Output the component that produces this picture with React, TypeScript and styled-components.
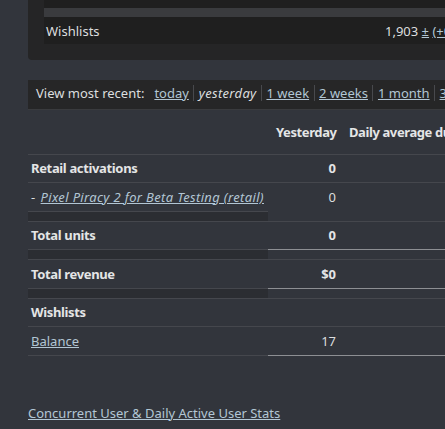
import { Fragment } from "react";
import styled, { createGlobalStyle } from "styled-components";

const GlobalStyle = createGlobalStyle`
  html, body {
    margin: 0;
    padding: 0;
    background: #32353c;
    overflow: hidden;
  }
  body {
    font-family: "Noto Sans", "Open Sans", sans-serif;
    font-size: 13px;
    color: #dcdedf;
  }
`;

const Page = styled.div`
  width: 900px;
  padding-left: 28px;
`;

const SummaryPanel = styled.div`
  background: #252526;
  border-bottom-left-radius: 4px;
  padding: 0 0 16px 16px;
  margin-top: -19px;
`;

const SummaryTable = styled.table`
  border-collapse: collapse;
  width: 860px;
`;

const SummaryRow = styled.tr<{ $strip?: boolean }>`
  background: ${(p) => (p.$strip ? "#3a3b3e" : "#1f1f1f")};
  height: ${(p) => (p.$strip ? "9px" : "27px")};
`;

const SummaryCell = styled.td<{ $w?: number }>`
  padding: 0 2px;
  white-space: nowrap;
  width: ${(p) => (p.$w ? `${p.$w}px` : "auto")};
`;

const Link = styled.a<{ $italic?: boolean }>`
  color: #b2c6d4;
  text-decoration: underline;
  font-style: ${(p) => (p.$italic ? "italic" : "normal")};
  letter-spacing: ${(p) => (p.$italic ? "0.35px" : "normal")};
  cursor: pointer;
`;

const RangeBar = styled.div`
  margin-top: 20px;
  height: 30px;
  background: #262627;
  border-bottom: 1px solid #3a3b3e;
  display: flex;
  align-items: center;
  padding: 0 0 3px 8px;
  box-sizing: border-box;
  white-space: nowrap;
`;

const RangeLabel = styled.span`
  margin-right: 10px;
`;

const Sep = styled.span`
  width: 1px;
  height: 16px;
  background: #48494d;
  margin: 0 4.5px;
`;

const Current = styled.span`
  font-style: italic;
  letter-spacing: 0.3px;
`;

const StatsTable = styled.table`
  border-collapse: collapse;
  table-layout: fixed;
  width: 700px;
`;

const HeadRow = styled.tr`
  height: 44px;
  border-bottom: 1px solid #45474d;
`;

const HeadCell = styled.th<{ $align?: string; $w?: number }>`
  width: ${(p) => (p.$w ? `${p.$w}px` : "auto")};
  box-sizing: border-box;
  font-weight: 700;
  letter-spacing: -0.4px;
  text-align: ${(p) => p.$align || "right"};
  padding: 0 5px 0 8px;
  white-space: nowrap;
  overflow: hidden;
  color: #e4e5e6;
`;

const DataRow = styled.tr<{ $tall?: boolean }>`
  height: ${(p) => (p.$tall ? "29px" : "28px")};
`;

type Line = "none" | "dark" | "light";

const lineColor = (l?: Line) =>
  l === "light" ? "1px solid #8d8f93" : l === "dark" ? "1px solid #45474d" : "none";

const LabelCell = styled.td<{ $bold?: boolean; $line?: Line }>`
  padding: 0 0 0 3px;
  white-space: nowrap;
  font-weight: ${(p) => (p.$bold ? 700 : 400)};
  letter-spacing: ${(p) => (p.$bold ? "-0.35px" : "normal")};
  color: ${(p) => (p.$bold ? "#e4e5e6" : "#dcdedf")};
  border-bottom: ${(p) => lineColor(p.$line)};
`;

const Dash = styled.span`
  margin-right: 2px;
`;

const ValueCell = styled.td<{ $bold?: boolean; $line?: Line }>`
  padding: 0 5px 0 0;
  text-align: right;
  white-space: nowrap;
  font-weight: ${(p) => (p.$bold ? 700 : 400)};
  color: ${(p) => (p.$bold ? "#e4e5e6" : "#dcdedf")};
  border-bottom: ${(p) => lineColor(p.$line)};
`;

const RestCell = styled.td<{ $line?: Line }>`
  border-bottom: ${(p) => lineColor(p.$line)};
`;

const SpacerRow = styled.tr`
  height: 10px;
  border-bottom: 1px solid #45474d;
`;

const SpacerLabel = styled.td`
  background: #2b2d32;
  padding: 0;
`;

const SpacerCell = styled.td`
  padding: 0;
`;

const Footer = styled.div`
  margin-top: 48px;
`;

type Row = {
  label: React.ReactNode;
  value: string;
  bold?: boolean;
  tall?: boolean;
  labelLine: Line;
  valueLine: Line;
  spacer?: boolean;
};

const rows: Row[] = [
  { label: "Retail activations", value: "0", bold: true, labelLine: "dark", valueLine: "dark" },
  {
    label: (
      <>
        <Dash>- </Dash>
        <Link $italic>Pixel Piracy 2 for Beta Testing (retail)</Link>
      </>
    ),
    value: "0",
    tall: true,
    labelLine: "dark",
    valueLine: "none",
    spacer: true,
  },
  { label: "Total units", value: "0", bold: true, labelLine: "dark", valueLine: "light", spacer: true },
  {
    label: "Total revenue",
    value: "$0",
    bold: true,
    tall: true,
    labelLine: "dark",
    valueLine: "light",
    spacer: true,
  },
  { label: "Wishlists", value: "", bold: true, labelLine: "dark", valueLine: "dark" },
  { label: <Link>Balance</Link>, value: "17", tall: true, labelLine: "dark", valueLine: "light" },
];

export default function App() {
  return (
    <>
      <GlobalStyle />
      <Page>
        <SummaryPanel>
          <SummaryTable>
            <tbody>
              <SummaryRow>
                <SummaryCell $w={335}>&nbsp;</SummaryCell>
                <SummaryCell />
              </SummaryRow>
              <SummaryRow $strip>
                <SummaryCell />
                <SummaryCell />
              </SummaryRow>
              <SummaryRow>
                <SummaryCell $w={335}>Wishlists</SummaryCell>
                <SummaryCell>
                  1,903 <Link>±</Link> <Link>(+0 today)</Link>
                </SummaryCell>
              </SummaryRow>
            </tbody>
          </SummaryTable>
        </SummaryPanel>

        <RangeBar>
          <RangeLabel>View most recent:</RangeLabel>
          <Link>today</Link>
          <Sep />
          <Current>yesterday</Current>
          <Sep />
          <Link>1 week</Link>
          <Sep />
          <Link>2 weeks</Link>
          <Sep />
          <Link>1 month</Link>
          <Sep />
          <Link>3 months</Link>
          <Sep />
          <Link>1 year</Link>
        </RangeBar>

        <StatsTable>
          <tbody>
            <HeadRow>
              <HeadCell $w={240} />
              <HeadCell $w={73}>Yesterday</HeadCell>
              <HeadCell $align="left">Daily average during period</HeadCell>
            </HeadRow>
            {rows.map((r, i) => (
              <Fragment key={i}>
                <DataRow $tall={r.tall}>
                  <LabelCell $bold={r.bold} $line={r.labelLine}>
                    {r.label}
                  </LabelCell>
                  <ValueCell $bold={r.bold} $line={r.valueLine}>
                    {r.value}
                  </ValueCell>
                  <RestCell $line={r.valueLine} />
                </DataRow>
                {r.spacer && (
                  <SpacerRow>
                    <SpacerLabel />
                    <SpacerCell />
                    <SpacerCell />
                  </SpacerRow>
                )}
              </Fragment>
            ))}
          </tbody>
        </StatsTable>

        <Footer>
          <Link>Concurrent User &amp; Daily Active User Stats</Link>
        </Footer>
      </Page>
    </>
  );
}
